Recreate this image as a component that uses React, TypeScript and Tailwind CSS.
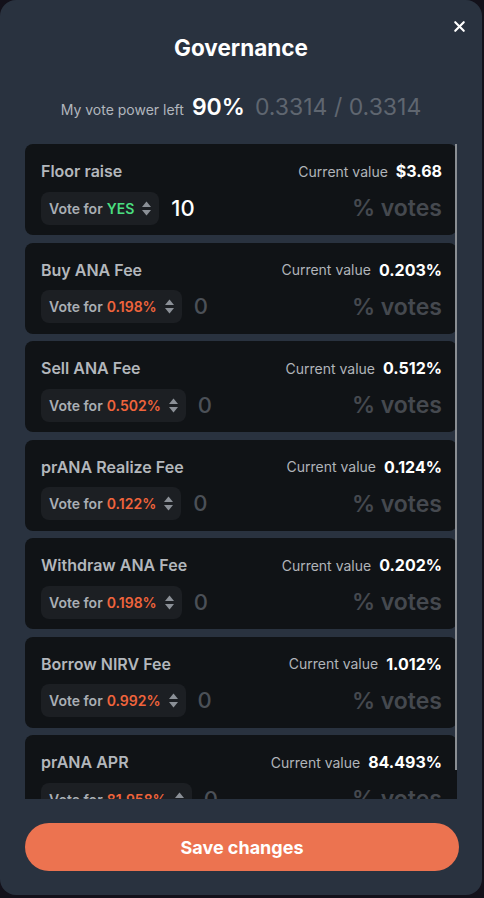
import { X } from "lucide-react";

interface Param {
  name: string;
  current: string;
  vote: string;
  amount: string;
  yes?: boolean;
}

const params: Param[] = [
  { name: "Floor raise", current: "$3.68", vote: "YES", amount: "10", yes: true },
  { name: "Buy ANA Fee", current: "0.203%", vote: "0.198%", amount: "0" },
  { name: "Sell ANA Fee", current: "0.512%", vote: "0.502%", amount: "0" },
  { name: "prANA Realize Fee", current: "0.124%", vote: "0.122%", amount: "0" },
  { name: "Withdraw ANA Fee", current: "0.202%", vote: "0.198%", amount: "0" },
  { name: "Borrow NIRV Fee", current: "1.012%", vote: "0.992%", amount: "0" },
  { name: "prANA APR", current: "84.493%", vote: "81.958%", amount: "0" },
];

const Arrows = () => (
  <svg width="9" height="15" viewBox="0 0 9 15" className="ml-2 shrink-0">
    <path d="M0 6 L4.5 0.5 L9 6 Z" fill="#8b9097" />
    <path d="M0 9 L4.5 14.5 L9 9 Z" fill="#8b9097" />
  </svg>
);

const ParamCard = ({ p }: { p: Param }) => (
  <div className="shrink-0 h-[91px] rounded-lg bg-[#101316] pl-4 pr-[15px] pt-4">
    <div className="flex items-center justify-between h-[22px]">
      <span className="text-[16px] font-semibold text-[#b3b7bc]">{p.name}</span>
      <div className="flex items-center gap-2">
        <span className="text-[14px] text-[#b1b5ba]">Current value</span>
        <span className="text-[16px] font-bold text-white">{p.current}</span>
      </div>
    </div>
    <div className="mt-[9px] flex items-center justify-between">
      <div className="flex items-center">
        <div className="flex items-center h-[33px] rounded-lg bg-[#1c1f23] pl-2 pr-[8px] text-[14px] font-semibold">
          <span className="text-[#a9aeb4]">Vote for</span>
          <span className={p.yes ? "ml-1 text-[#4ade80]" : "ml-1 text-[#f0643c]"}>{p.vote}</span>
          <Arrows />
        </div>
        <span className={p.yes ? "ml-3 text-[22px] font-medium text-white" : "ml-3 text-[22px] font-medium text-[#4b5057]"}>
          {p.amount}
        </span>
      </div>
      <span className="text-[23px] font-semibold text-[#45494f]">% votes</span>
    </div>
  </div>
);

export default function App() {
  return (
    <div className="w-[484px] h-[898px] bg-[#13111a] font-['Inter',sans-serif]">
      <div className="relative w-[482px] h-[895px] rounded-2xl bg-[#29323f] flex flex-col">
        <button className="absolute top-[18px] right-[14px] text-white">
          <X size={17} strokeWidth={3} />
        </button>

        <h1 className="mt-[34px] text-center text-[22.5px] leading-7 font-bold text-white">Governance</h1>

        <div className="mt-[28px] flex items-baseline justify-center h-[28px]">
          <span className="text-[14px] text-[#b1b6bd]">My vote power left</span>
          <span className="ml-2 text-[23px] font-semibold text-white">90%</span>
          <span className="ml-[10px] text-[23px] text-[#5f6670]">0.3314 / 0.3314</span>
        </div>

        <div className="relative mt-[26px] ml-[25px] mr-[23px] h-[655px] overflow-hidden">
          <div className="flex flex-col gap-[7.5px] w-[432px]">
            {params.map((p) => (
              <ParamCard key={p.name} p={p} />
            ))}
          </div>
          <div className="absolute top-0 left-[430px] w-[2px] h-[626px] bg-[#8a8e93]" />
        </div>

        <button className="mt-[24px] ml-[25px] mr-[23px] h-[48px] rounded-full bg-[#ec7350] text-[18px] font-bold text-white">
          Save changes
        </button>
      </div>
    </div>
  );
}
